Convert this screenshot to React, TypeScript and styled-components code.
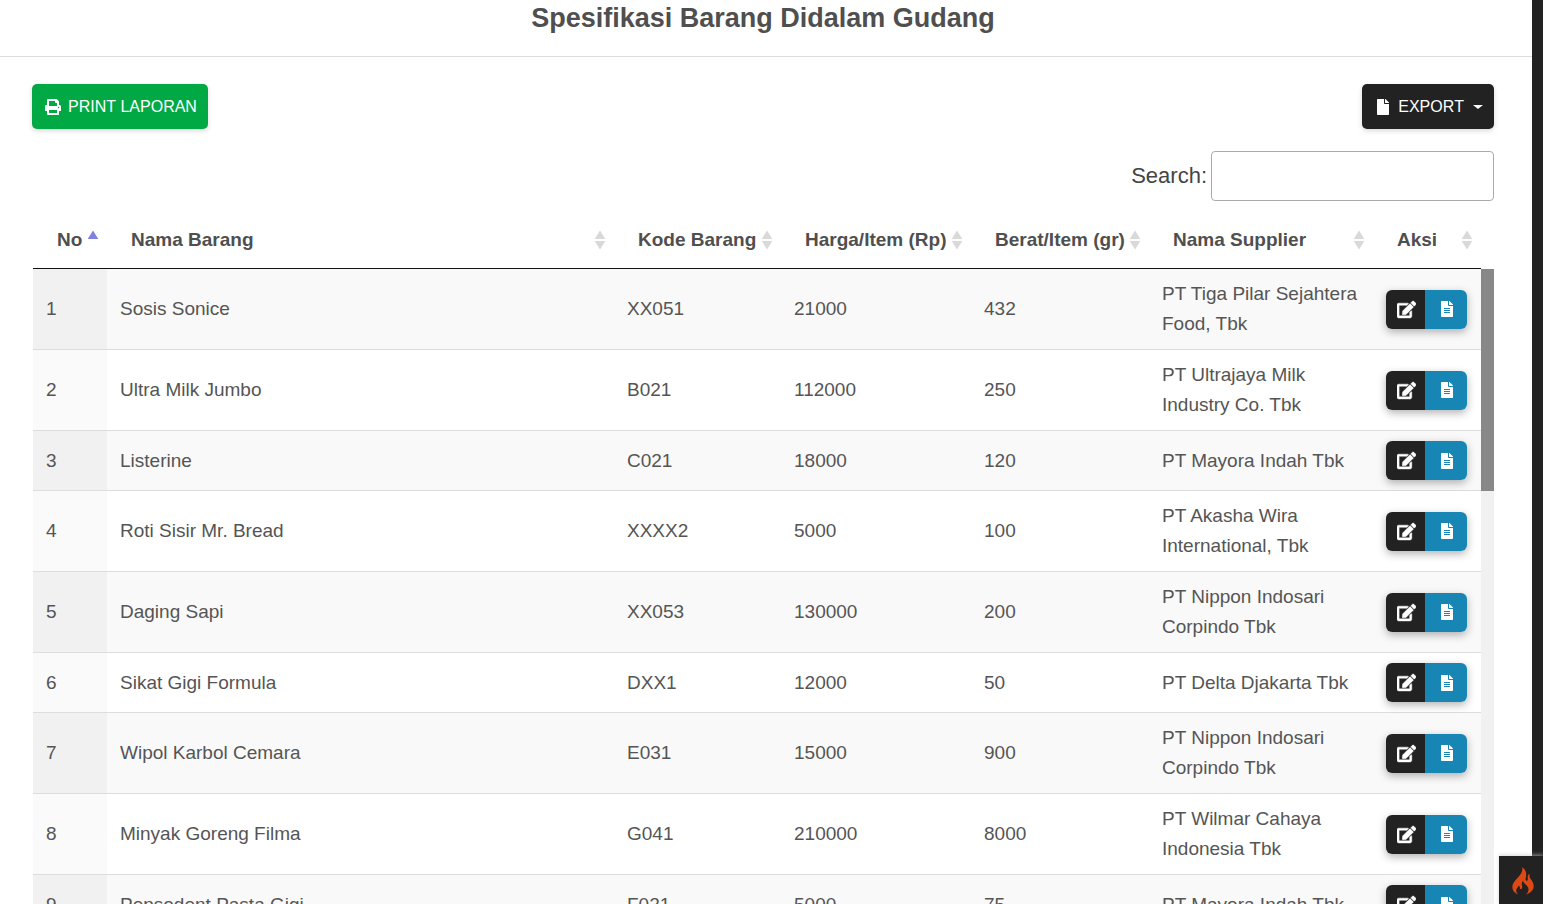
import React from "react";
import styled, { createGlobalStyle } from "styled-components";
import { FaFile, FaEdit, FaFileAlt } from "react-icons/fa";

const GlobalStyle = createGlobalStyle`
  *, *::before, *::after { box-sizing: border-box; }
  body {
    margin: 0;
    background: #222;
    color: #555;
    font-family: "Liberation Sans", Arial, sans-serif;
    font-size: 19px;
    line-height: 30px;
  }
`;

const Page = styled.main`
  height: 100vh;
  margin-right: 11px;
  overflow: hidden;
  background: #fff;
`;

const PageHeader = styled.header`
  padding: 3px 6px 22px 0;
  border-bottom: 1px solid #ddd;
  text-align: center;
`;

const Title = styled.h1`
  margin: 0;
  font-size: 27px;
  line-height: 31px;
  color: #4f4f4f;
`;

const Content = styled.section`
  padding: 27px 38px 0 32px;
`;

const Toolbar = styled.div`
  display: flex;
  justify-content: space-between;
`;

const ToolButton = styled.button<{ $tone: string }>`
  display: flex;
  align-items: center;
  gap: 7px;
  height: 45px;
  padding: 1px 11px 0 13px;
  border: 0;
  border-radius: 5px;
  background: ${(p) => p.$tone};
  color: #fff;
  font-family: inherit;
  font-size: 16px;
  font-kerning: none;
  text-transform: uppercase;
  box-shadow: 0 2px 5px rgba(0, 0, 0, 0.15);
`;

const Caret = styled.span`
  margin-left: 2px;
  border: 5px solid transparent;
  border-top: 4px solid #fff;
  border-bottom: 0;
`;

const SearchRow = styled.div`
  display: flex;
  justify-content: flex-end;
  align-items: center;
  gap: 4px;
  margin-top: 22px;
`;

const SearchLabel = styled.label`
  font-size: 22px;
  color: #444;
`;

const SearchInput = styled.input`
  width: 283px;
  height: 50px;
  padding: 5px 10px;
  border: 1px solid #aaa;
  border-radius: 4px;
  background: transparent;
  font: inherit;
`;

const TableArea = styled.div`
  display: flex;
  margin-top: 9px;
  padding-left: 1px;
`;

const Table = styled.table`
  flex: 1;
  table-layout: fixed;
  border-collapse: separate;
  border-spacing: 0;
`;

const Col = styled.col<{ $width?: number }>`
  width: ${(p) => (p.$width ? `${p.$width}px` : "auto")};
`;

const HeadCell = styled.th`
  height: 59px;
  padding: 2px 8px 0 24px;
  border-bottom: 1px solid #111;
  color: #4f4f4f;
  text-align: left;
  white-space: nowrap;
`;

const HeadInner = styled.div`
  display: flex;
  align-items: center;
  justify-content: space-between;
`;

const Row = styled.tr`
  background: #fff;
  &:nth-child(odd) { background: #f9f9f9; }
  & > td:first-child { background: #fafafa; }
  &:nth-child(odd) > td:first-child { background: #f1f1f1; }
`;

const Cell = styled.td`
  padding: 10px 13px;
  border-bottom: 1px solid #ddd;
`;

const ButtonGroup = styled.div`
  display: flex;
  width: 81px;
  height: 39px;
  border-radius: 6px;
  overflow: hidden;
  box-shadow: 0 3px 8px rgba(0, 0, 0, 0.3);
`;

const ActionButton = styled.button<{ $tone: string; $width: number }>`
  display: flex;
  align-items: center;
  justify-content: center;
  width: ${(p) => p.$width}px;
  padding: 0 0 0 2px;
  border: 0;
  background: ${(p) => p.$tone};
  color: #fff;
  font-size: 16px;
`;

const EditIcon = styled(FaEdit)`
  stroke: currentColor;
  stroke-width: 14px;
`;

const ScrollTrack = styled.div`
  width: 13px;
  margin-top: 59px;
  background: #f1f1f1;
`;

const ScrollThumb = styled.div`
  height: 222px;
  background: #888;
`;

const DebugToggle = styled.button`
  position: fixed;
  right: 0;
  bottom: 0;
  display: flex;
  align-items: center;
  justify-content: center;
  width: 44px;
  height: 48px;
  padding: 2px 0 0 4px;
  border: 0;
  background: #222;
  box-shadow: 0 -1px 4px rgba(200, 200, 200, 0.7);
`;

type Sort = "asc" | "none";

function SortIcon({ sort }: { sort: Sort }) {
  return (
    <svg width="12" height="20" viewBox="0 0 12 20" aria-hidden="true">
      <path d="M6 0.5 11.3 9H0.7Z" fill={sort === "asc" ? "#8080dd" : "#d9d9d9"} />
      {sort === "none" && <path d="M6 19.5 11.3 11H0.7Z" fill="#d9d9d9" />}
    </svg>
  );
}

function PrintIcon() {
  return (
    <svg width="16" height="16" viewBox="0 0 512 512" fill="currentColor" aria-hidden="true">
      <path d="M464 192h-16V81.941a24 24 0 0 0-7.029-16.97L383.03 7.029A24 24 0 0 0 366.059 0H88C74.745 0 64 10.745 64 24v168H48c-26.51 0-48 21.49-48 48v132c0 6.627 5.373 12 12 12h52v104c0 13.255 10.745 24 24 24h336c13.255 0 24-10.745 24-24V384h52c6.627 0 12-5.373 12-12V240c0-26.51-21.49-48-48-48zm-80 256H128v-96h256v96zM128 224V64h192v40c0 13.2 10.8 24 24 24h40v96H128zm304 72c-13.254 0-24-10.746-24-24s10.746-24 24-24 24 10.746 24 24-10.746 24-24 24z" />
    </svg>
  );
}

function FlameIcon() {
  return (
    <svg width="22" height="28" viewBox="0 0 22 28" aria-hidden="true">
      <path
        fill="#dd4814"
        d="M10.2.3C11 4 9.300 6.800 6.600 9.800 3.500 13.200.4 16.200.4 20.300c0 3.300 2.400 6 6 7.200C4.800 26.300 4 24.800 4.300 23c.3-1.900 1.700-2.800 2.400-4.500 1.100.8 1.400 2 1.100 3.200.8.8 2.200.3 2.400-.9.3-2.500-1.500-3.800.8-7 .2 3 5.500 4.500 5.500 8.500 0 2.300-1 3.900-2.600 5.100 4.500-1 7.800-4.100 7.800-8.300 0-3.400-2-5.600-3.400-7.700-.9-1.500-1.100-3-.7-4.600-1.700 1-2.200 2.400-1.800 4.200.3 1.500.1 2.300-.7 2.700-1 .4-1.700-.4-1.500-1.600C14.400 8.400 15.300 3.800 10.200.3Z"
      />
    </svg>
  );
}

const columns: { label: string; width?: number; sort: Sort }[] = [
  { label: "No", width: 74, sort: "asc" },
  { label: "Nama Barang", sort: "none" },
  { label: "Kode Barang", width: 167, sort: "none" },
  { label: "Harga/Item (Rp)", width: 190, sort: "none" },
  { label: "Berat/Item (gr)", width: 178, sort: "none" },
  { label: "Nama Supplier", width: 224, sort: "none" },
  { label: "Aksi", width: 108, sort: "none" },
];

const items = [
  ["Sosis Sonice", "XX051", "21000", "432", "PT Tiga Pilar Sejahtera Food, Tbk"],
  ["Ultra Milk Jumbo", "B021", "112000", "250", "PT Ultrajaya Milk Industry Co. Tbk"],
  ["Listerine", "C021", "18000", "120", "PT Mayora Indah Tbk"],
  ["Roti Sisir Mr. Bread", "XXXX2", "5000", "100", "PT Akasha Wira International, Tbk"],
  ["Daging Sapi", "XX053", "130000", "200", "PT Nippon Indosari Corpindo Tbk"],
  ["Sikat Gigi Formula", "DXX1", "12000", "50", "PT Delta Djakarta Tbk"],
  ["Wipol Karbol Cemara", "E031", "15000", "900", "PT Nippon Indosari Corpindo Tbk"],
  ["Minyak Goreng Filma", "G041", "210000", "8000", "PT Wilmar Cahaya Indonesia Tbk"],
  ["Pepsodent Pasta Gigi", "F021", "5000", "75", "PT Mayora Indah Tbk"],
];

export default function App() {
  return (
    <>
      <GlobalStyle />
      <Page>
        <PageHeader>
          <Title>Spesifikasi Barang Didalam Gudang</Title>
        </PageHeader>
        <Content>
          <Toolbar>
            <ToolButton type="button" $tone="#00a944">
              <PrintIcon />
              Print Laporan
            </ToolButton>
            <ToolButton type="button" $tone="#222" aria-haspopup="menu">
              <FaFile size={16} />
              Export
              <Caret />
            </ToolButton>
          </Toolbar>
          <SearchRow>
            <SearchLabel htmlFor="search">Search:</SearchLabel>
            <SearchInput id="search" type="search" />
          </SearchRow>
          <TableArea>
            <Table>
              <colgroup>
                {columns.map((c) => (
                  <Col key={c.label} $width={c.width} />
                ))}
              </colgroup>
              <thead>
                <tr>
                  {columns.map((c) => (
                    <HeadCell key={c.label} scope="col">
                      <HeadInner>
                        {c.label}
                        <SortIcon sort={c.sort} />
                      </HeadInner>
                    </HeadCell>
                  ))}
                </tr>
              </thead>
              <tbody>
                {items.map((item, i) => (
                  <Row key={item[1]}>
                    <Cell>{i + 1}</Cell>
                    {item.map((value, j) => (
                      <Cell key={j}>{value}</Cell>
                    ))}
                    <Cell>
                      <ButtonGroup>
                        <ActionButton type="button" $tone="#222" $width={39} aria-label="Edit">
                          <EditIcon size={19} />
                        </ActionButton>
                        <ActionButton type="button" $tone="#1786b4" $width={42} aria-label="Detail">
                          <FaFileAlt />
                        </ActionButton>
                      </ButtonGroup>
                    </Cell>
                  </Row>
                ))}
              </tbody>
            </Table>
            <ScrollTrack>
              <ScrollThumb />
            </ScrollTrack>
          </TableArea>
        </Content>
      </Page>
      <DebugToggle type="button" aria-label="Debug toolbar">
        <FlameIcon />
      </DebugToggle>
    </>
  );
}
